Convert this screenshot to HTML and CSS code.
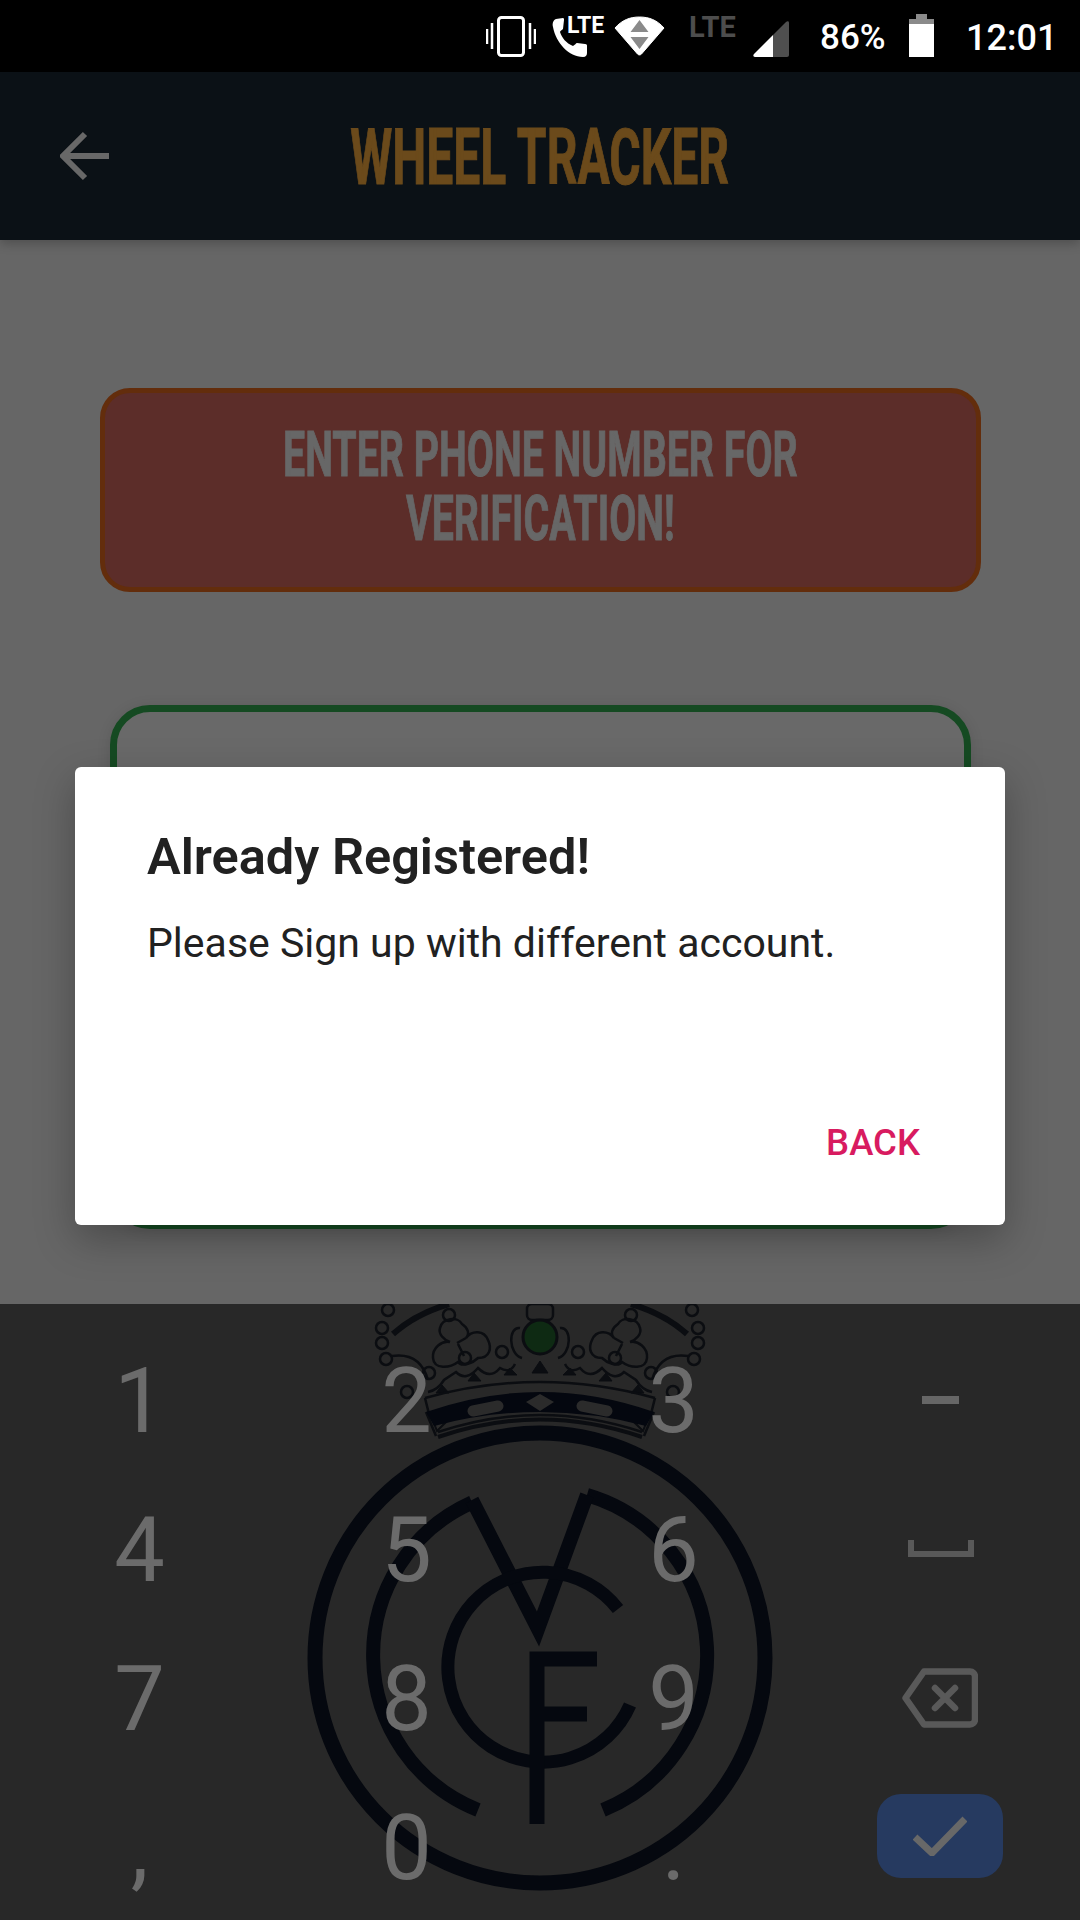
FILE: index.html
```html
<!DOCTYPE html>
<html lang="en">
<head>
<meta charset="utf-8">
<title>Wheel Tracker</title>
<link rel="stylesheet" href="styles.css">
</head>
<body>
<div class="page">
  <header class="status">
    <svg class="ic ic-vib" width="50" height="44" viewBox="0 0 50 44">
      <rect x="12.5" y="3.5" width="25" height="38" rx="3" fill="none" stroke="#fff" stroke-width="3"/>
      <path d="M1 15v15M6 9v26M44 9v26M49 15v15" fill="none" stroke="#fff" stroke-width="2.5"/>
    </svg>
    <div class="ic-call">
      <svg width="40" height="42" viewBox="0 0 40 42">
        <path d="M2 10C1 7 2 3 5 2l7-1c1 0 1 1 1 2l-1 9c-1 1-3 2-3 3 2 6 6 11 13 14 2-1 3-3 4-3l8 1c2 0 2 1 2 2v7c0 2-1 4-4 4C18 40 5 26 2 10z" fill="#fff"/>
      </svg>
      <span class="lte lte-w">LTE</span>
    </div>
    <svg class="ic ic-wifi" width="51" height="40" viewBox="0 0 51 40">
      <path d="M1 12C8 4 16 1 25.500 1S43 4 50 12L27.500 38c-1 1.200-3 1.200-4 0z" fill="#fff" stroke="#fff" stroke-linejoin="round"/>
      <path d="M25.500 4l-9 12h18zM16.500 21h18l-9 12z" fill="#8a8a8a"/>
    </svg>
    <span class="lte lte-g">LTE</span>
    <svg class="ic ic-sig" width="36" height="36" viewBox="0 0 36 36">
      <path d="M20 14L1 33c-1 1-1 3 1 3h18z" fill="#fff"/>
      <path d="M20 14L33 1c1.500-1.300 3-1 3 1v32c0 1-1 2-2 2H20z" fill="#4f4f4f"/>
    </svg>
    <span class="pct">86%</span>
    <svg class="ic ic-bat" width="25" height="43" viewBox="0 0 25 43">
      <path d="M7 0h11v5h7v5H0V5h7z" fill="#8a8a8a"/>
      <rect y="10" width="25" height="33" fill="#fff"/>
    </svg>
    <span class="clock">12:01</span>
  </header>

  <div class="appbar">
    <svg class="back" width="50" height="50" viewBox="0 0 50 50">
      <path d="M25 3L3 25l22 22M3 25h46" fill="none" stroke="#686868" stroke-width="6"/>
    </svg>
    <h1 class="title"><span class="squeeze">WHEEL TRACKER</span></h1>
  </div>

  <main class="main">
    <div class="notice">
      <p class="notice-text">ENTER PHONE NUMBER FOR<br>VERIFICATION!</p>
    </div>
    <div class="form-box"></div>
  </main>

  <section class="keyboard">
    <svg class="crest" width="1080" height="616" viewBox="0 1304 1080 616">
      <defs>
        <g id="half" fill="none" stroke="#0b0d11" stroke-width="2.500">
          <circle cx="388" cy="1310" r="6"/><circle cx="382" cy="1328" r="6"/><circle cx="382" cy="1343" r="6"/><circle cx="386" cy="1359" r="6"/>
          <path d="M393 1334Q415 1314 449 1304" stroke-width="6"/>
          <path d="M392 1356Q420 1352 428 1380"/>
          <circle cx="449" cy="1315" r="6"/>
          <circle cx="407" cy="1392" r="6"/>
          <circle cx="429" cy="1373" r="6"/>
          <circle cx="465" cy="1358" r="6"/>
          <circle cx="502" cy="1352" r="6"/>
          <path d="M462 1324C458 1316 442 1318 440 1328C438 1334 444 1340 450 1342C442 1340 432 1348 433 1358C434 1370 450 1368 458 1362C462 1368 474 1362 478 1358C490 1358 492 1348 488 1340C484 1330 472 1330 466 1338C470 1334 468 1328 462 1324z"/>
          <path d="M457 1343l9-5M458 1344l6 12"/>
          <path d="M520 1328C508 1326 508 1354 522 1358"/>
          <path d="M515 1364Q510 1374 500 1368Q490 1380 478 1368Q466 1382 456 1372L444 1380Q438 1390 428 1392"/>
          <path d="M436 1393l6-8 7 8zM468 1381l6-8 7 8zM504 1375l6-7 7 7z" fill="#0b0d11" stroke-width="1"/>
          <path d="M432 1418l15 3-10 10z" fill="#2b2b2b" stroke="#0b0d11" stroke-width="2"/>
          <path d="M425 1398l4 16M426 1412l10 24" stroke-width="2.500"/>
        </g>
      </defs>
      <use href="#half"/>
      <use href="#half" transform="translate(1080 0) scale(-1 1)"/>
      <g fill="none" stroke="#0b0d11" stroke-width="2.500">
        <rect x="527" y="1304" width="26" height="16" rx="5"/>
        <path d="M540 1361l-8 12h16z" fill="#0b0d11" stroke-width="1"/>
        <path d="M425 1398Q540 1366 655 1398"/>
        <path d="M438 1432Q540 1398 642 1432"/>
      </g>
      <circle cx="540" cy="1337" r="17" fill="#0e2a13" stroke="#0b0d11" stroke-width="3"/>
      <path d="M426 1412Q540 1372 654 1412L646 1426Q540 1398 434 1426z" fill="#04070f"/>
      <path d="M473 1411L498 1406M582 1406L607 1411" fill="none" stroke="#2b2b2b" stroke-width="11" stroke-linecap="round"/>
      <path d="M526 1402l14-8 14 8-14 9z" fill="#2b2b2b"/>
      <path d="M438 1437Q540 1402 642 1437" fill="none" stroke="#0b0d11" stroke-width="4"/>
      <g fill="none" stroke="#05080f" stroke-miterlimit="10">
        <circle cx="540" cy="1658" r="225" stroke-width="15"/>
        <path d="M472 1502.500A167 167 0 0 0 478 1810M603 1810A167 167 0 0 0 587 1495" stroke-width="14"/>
        <path d="M472 1500L538 1629L587 1495" stroke-width="14"/>
        <path d="M618 1609A95 95 0 1 0 630 1705" stroke-width="13"/>
        <path d="M537 1824V1659H597M537 1714H587" stroke-width="15"/>
      </g>
    </svg>
    <div class="keys">
      <div class="key">1</div>
      <div class="key">2</div>
      <div class="key">3</div>
      <div class="key key-icon"><span class="dash"></span></div>
      <div class="key">4</div>
      <div class="key">5</div>
      <div class="key">6</div>
      <div class="key key-icon">
        <svg width="66" height="17" viewBox="0 0 66 17"><path d="M3 0v14h60V0" fill="none" stroke="#595959" stroke-width="6"/></svg>
      </div>
      <div class="key">7</div>
      <div class="key">8</div>
      <div class="key">9</div>
      <div class="key key-icon key-nudge">
        <svg width="76" height="60" viewBox="0 0 76 60"><path d="M22 3.500H68a5 5 0 0 1 5 5v43a5 5 0 0 1-5 5H22L3.500 30zM33 20l20 20M53 20L33 40" fill="none" stroke="#595959" stroke-width="6.500" stroke-linejoin="round" stroke-linecap="round"/></svg>
      </div>
      <div class="key">,</div>
      <div class="key">0</div>
      <div class="key">.</div>
      <div class="key key-icon key-nudge key-enter">
        <div class="enter">
          <svg width="54" height="40" viewBox="0 0 54 40"><path d="M2 21l17 16L52 3" fill="none" stroke="#686868" stroke-width="7"/></svg>
        </div>
      </div>
    </div>
  </section>

  <div class="dialog" role="dialog">
    <h2 class="dialog-title">Already Registered!</h2>
    <p class="dialog-body">Please Sign up with different account.</p>
    <div class="dialog-actions"><span class="dialog-btn">BACK</span></div>
  </div>
</div>
</body>
</html>
```

FILE: styles.css
```css
* { box-sizing: border-box; }
html, body { margin: 0; padding: 0; }
body { font-family: Roboto, "Liberation Sans", sans-serif; background: #666; }

.page {
  position: relative;
  width: 1080px;
  height: 1920px;
  overflow: hidden;
  display: flex;
  flex-direction: column;
}

/* status bar */
.status {
  height: 72px;
  flex: none;
  background: #000;
  display: flex;
  align-items: center;
  padding-left: 486px;
  color: #fff;
}
.ic { flex: none; display: block; }
.ic-vib { margin-right: 15px; }
.ic-call { position: relative; width: 52px; height: 42px; margin-right: 11px; margin-top: 3px; }
.ic-call svg { position: absolute; left: 0; top: 0; }
.lte { font-weight: 700; line-height: 1; letter-spacing: 0; }
.lte-w { position: absolute; left: 16px; top: -3px; font-size: 23px; }
.lte-g { color: #4d4d4d; font-size: 29px; margin-left: 24px; margin-right: 18px; margin-top: -18px; width: 46px; }
.ic-sig { margin-top: 6px; margin-right: 31px; }
.pct { font-size: 35px; font-weight: 500; width: 65px; margin-right: 24px; margin-top: 3px; }
.ic-bat { margin-top: -1px; margin-right: 32px; }
.clock { font-size: 36px; font-weight: 500; margin-top: 3px; }

/* app bar */
.appbar {
  position: relative;
  z-index: 1;
  height: 168px;
  flex: none;
  background: #0b1116;
  display: flex;
  align-items: center;
  justify-content: center;
  box-shadow: 0 4px 10px rgba(0, 0, 0, .22);
}
.back { position: absolute; left: 60px; top: 59px; }
.title {
  margin: 0;
  padding-top: 5px;
  font-size: 77px;
  font-weight: 700;
  line-height: 1;
  color: #6b4a1b;
  white-space: nowrap;
  -webkit-text-stroke: 1px #6b4a1b;
}
.squeeze { display: inline-block; transform: scaleX(.624); }

/* body */
.main {
  flex: 1;
  display: flex;
  flex-direction: column;
  align-items: center;
  padding-top: 148px;
  gap: 113px;
}
.notice {
  width: 881px;
  height: 204px;
  flex: none;
  border: 5px solid #632d0c;
  border-radius: 30px;
  background: #5c2d29;
  display: flex;
  align-items: center;
  justify-content: center;
}
.notice-text {
  margin: 0 0 6px;
  font-size: 63px;
  font-weight: 700;
  line-height: 64px;
  color: #676767;
  text-align: center;
  white-space: nowrap;
  transform: scaleX(.624);
  -webkit-text-stroke: 1px #676767;
}
.form-box {
  width: 861px;
  height: 524px;
  flex: none;
  border: 7px solid #154a22;
  border-radius: 40px;
  background: #696969;
  box-shadow: 0 2px 14px rgba(0, 0, 0, .12);
}

/* keyboard */
.keyboard {
  position: relative;
  height: 616px;
  flex: none;
  background: #282828;
  overflow: hidden;
}
.crest { position: absolute; left: 0; top: 0; }
.keys {
  position: relative;
  display: grid;
  grid-template-columns: repeat(4, 267px);
  grid-auto-rows: 149px;
  padding: 21px 0 0 6px;
}
.key {
  display: flex;
  align-items: center;
  justify-content: center;
  padding-top: 5px;
  font-size: 90px;
  line-height: 1;
  color: #6b6b6b;
}
.key-icon { padding-top: 0; }
.key-nudge { padding-right: 2px; }
.dash { width: 37px; height: 8px; background: #666; }
.key-enter { align-items: flex-start; padding-top: 22px; }
.enter {
  width: 126px;
  height: 84px;
  border-radius: 24px;
  background: #263a60;
  display: flex;
  align-items: center;
  justify-content: center;
}

/* dialog */
.dialog {
  position: absolute;
  left: 75px;
  top: 767px;
  width: 930px;
  height: 458px;
  background: #fff;
  border-radius: 6px;
  box-shadow: 0 14px 40px rgba(0, 0, 0, .28);
  display: flex;
  flex-direction: column;
  padding: 0 84px 0 72px;
}
.dialog-title {
  margin: 62px 0 0;
  font-size: 50.5px;
  line-height: 56px;
  font-weight: 600;
  color: #212121;
}
.dialog-body {
  margin: 34px 0 0;
  font-size: 41px;
  line-height: 48px;
  color: #212121;
}
.dialog-actions {
  margin-top: auto;
  margin-bottom: 62px;
  display: flex;
  justify-content: flex-end;
}
.dialog-btn {
  margin-right: 1px;
  font-size: 36.5px;
  line-height: 40px;
  font-weight: 500;
  color: #d81b60;
}
```
